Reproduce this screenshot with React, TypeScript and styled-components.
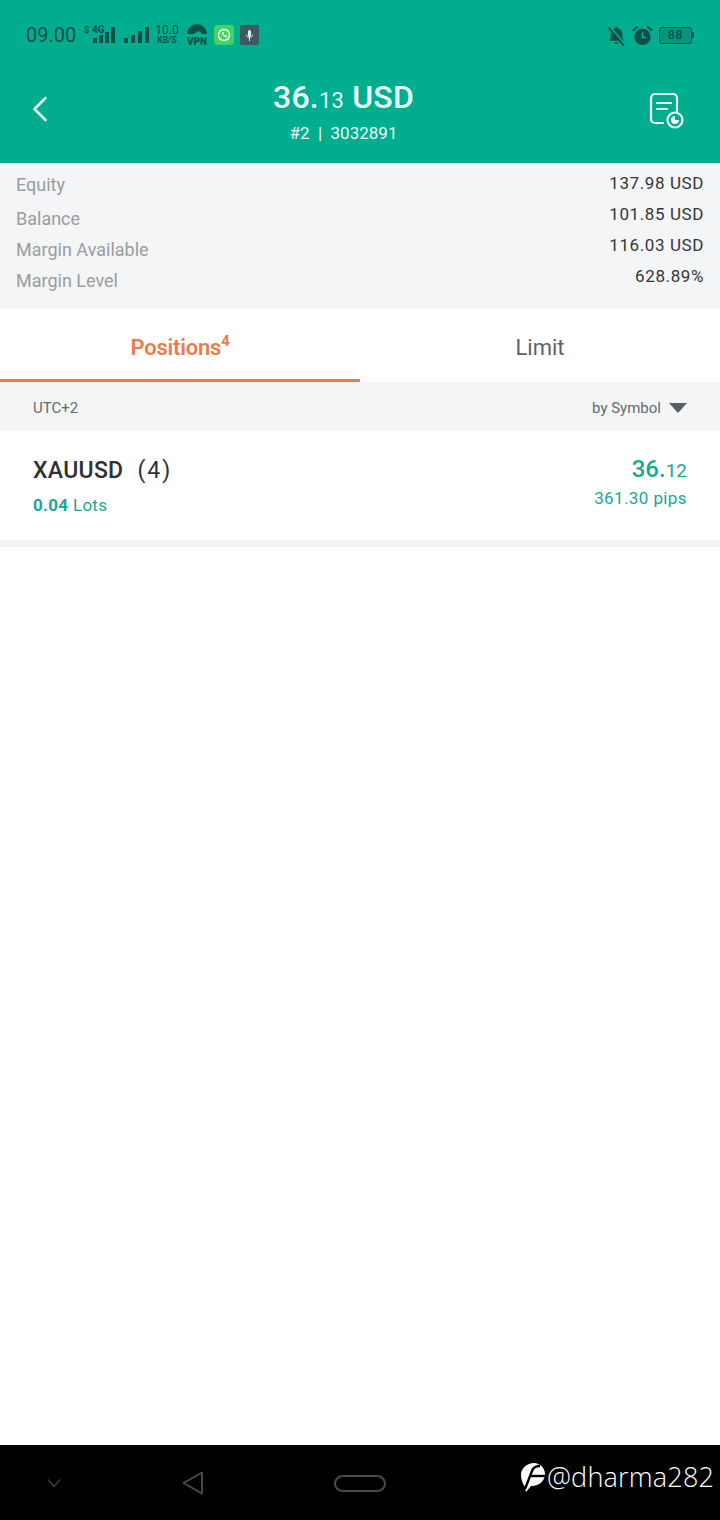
import styled, { createGlobalStyle } from "styled-components";
import { ChevronLeft } from "lucide-react";

const GlobalStyle = createGlobalStyle`
  html, body {
    margin: 0;
    padding: 0;
    background: #fff;
  }
  body {
    font-family: Roboto, "Liberation Sans", sans-serif;
  }
`;

const darkIcon = "#0b4f47";
const green = "#00ae8f";

const accounts = [
  { label: "Equity", value: "137.98 USD" },
  { label: "Balance", value: "101.85 USD" },
  { label: "Margin Available", value: "116.03 USD" },
  { label: "Margin Level", value: "628.89%" },
];

const App = () => {
  return (
    <Page>
      <GlobalStyle />
      <Header>
        <StatusBar>
          <StatusGroup>
            <Clock>09.00</Clock>
            <SimIcon />
            <BarsIcon />
            <Speed>
              <b>10.0</b>
              <span>KB/S</span>
            </Speed>
            <VpnIcon />
            <WhatsappIcon />
            <MicTile />
          </StatusGroup>
          <StatusRight>
            <BellOffIcon />
            <AlarmIcon />
            <Battery>
              <BatteryBody>88</BatteryBody>
              <BatteryCap />
            </Battery>
          </StatusRight>
        </StatusBar>
        <TitleBar>
          <BackButton>
            <ChevronLeft size={44} strokeWidth={1.4} color="#e8fbf6" />
          </BackButton>
          <TitleBlock>
            <Amount>
              36.<small>13</small> USD
            </Amount>
            <Account>#2&nbsp;&nbsp;|&nbsp;&nbsp;3032891</Account>
          </TitleBlock>
          <HistoryIcon />
        </TitleBar>
      </Header>

      <Summary>
        <SummaryColumn>
          {accounts.map((a) => (
            <SummaryLabel key={a.label}>{a.label}</SummaryLabel>
          ))}
        </SummaryColumn>
        <SummaryValues>
          {accounts.map((a) => (
            <SummaryValue key={a.label}>{a.value}</SummaryValue>
          ))}
        </SummaryValues>
      </Summary>

      <Tabs>
        <Tab $active>
          Positions<sup>4</sup>
        </Tab>
        <Tab>Limit</Tab>
      </Tabs>

      <FilterBar>
        <span>UTC+2</span>
        <Sort>
          by Symbol
          <Caret />
        </Sort>
      </FilterBar>

      <PositionRow>
        <div>
          <Symbol>
            XAUUSD<Count>(4)</Count>
          </Symbol>
          <Lots>
            <b>0.04</b> Lots
          </Lots>
        </div>
        <Profit>
          <ProfitValue>
            36.<small>12</small>
          </ProfitValue>
          <Pips>361.30 pips</Pips>
        </Profit>
      </PositionRow>
      <Divider />

      <Empty />

      <NavBar>
        <NavIcons>
          <svg width="18" height="12" viewBox="0 0 18 12" fill="none">
            <path d="M3 2.5 9 9.5l6-7" stroke="#3d3d3d" strokeWidth="1.5" />
          </svg>
          <BackTriangle width="24" height="26" viewBox="0 0 24 26" fill="none">
            <path
              d="M21 2.5v21L2.5 13z"
              stroke="#4a4a4a"
              strokeWidth="2"
              strokeLinejoin="round"
            />
          </BackTriangle>
          <HomePill />
        </NavIcons>
        <Watermark>
          <FeatherLogo />
          <span>@dharma282</span>
        </Watermark>
      </NavBar>
    </Page>
  );
};

const SimIcon = () => (
  <svg width="34" height="20" viewBox="0 0 34 20" fill={darkIcon}>
    <text x="0" y="8" fontSize="9" fontWeight="700" fontFamily="Roboto, sans-serif">
      $
    </text>
    <text x="8" y="8" fontSize="10" fontWeight="700" fontFamily="Roboto, sans-serif">
      4G
    </text>
    <rect x="9" y="13" width="4" height="5" />
    <rect x="15" y="10" width="4" height="8" />
    <rect x="21" y="7" width="4" height="11" />
    <rect x="27" y="2" width="4" height="16" />
  </svg>
);

const BarsIcon = () => (
  <svg width="25" height="20" viewBox="0 0 25 20" fill={darkIcon}>
    <rect x="0" y="13" width="4" height="5" />
    <rect x="7" y="10" width="4" height="8" />
    <rect x="14" y="6" width="4" height="12" />
    <rect x="21" y="2" width="4" height="16" />
  </svg>
);

const VpnIcon = () => (
  <VpnSvg width="22" height="24" viewBox="0 0 22 24">
    <path d="M1 12a10 10 0 0 1 20 0h-5a6 6 0 0 0-4-3l-4 3z" fill={darkIcon} />
    <text
      x="11"
      y="23"
      textAnchor="middle"
      fontSize="10"
      fontWeight="900"
      fill={darkIcon}
      fontFamily="Roboto, sans-serif"
    >
      VPN
    </text>
  </VpnSvg>
);

const WhatsappIcon = () => (
  <svg width="20" height="20" viewBox="0 0 20 20">
    <rect width="20" height="20" rx="4" fill="#3ed65f" />
    <circle cx="10" cy="10" r="5.5" fill="none" stroke="#fff" strokeWidth="1.4" />
    <path d="M4.5 15.5l1.2-3.6 2.3 2.3z" fill="#fff" />
    <path
      d="M8 7.5c0 2.5 2 4.500 4.500 4.700l.6-1.400-1.500-.7-.6.6c-.7-.3-1.200-.8-1.500-1.500l.6-.6-.7-1.500z"
      fill="#fff"
    />
  </svg>
);

const MicTile = () => (
  <svg width="19" height="20" viewBox="0 0 19 20">
    <rect width="19" height="20" rx="2" fill="#3f5a60" />
    <rect x="8" y="5" width="3" height="7" rx="1.5" fill="#e6eeee" />
    <path
      d="M6.500 9.500c0 4 6 4 6 0M9.500 12v4"
      stroke="#e6eeee"
      strokeWidth="1"
      fill="none"
    />
  </svg>
);

const BellOffIcon = () => (
  <svg width="19" height="21" viewBox="0 0 20 22">
    <path
      d="M10 2a1.500 1.500 0 0 1 1.500 1.500c3 .8 4.500 3 4.500 6v4l2 3H2l2-3v-4c0-3 1.500-5.200 4.500-6A1.500 1.500 0 0 1 10 2zM8 18h4a2 2 0 0 1-4 0z"
      fill={darkIcon}
    />
    <path d="M2 1l16 19" stroke={green} strokeWidth="3" />
    <path d="M1.500 2.500l16 19" stroke={darkIcon} strokeWidth="2" />
  </svg>
);

const AlarmIcon = () => (
  <svg width="21" height="21" viewBox="0 0 22 22">
    <circle cx="11" cy="12.500" r="8.500" fill={darkIcon} />
    <path
      d="M1.500 5.500 5.500 2M20.500 5.500 16.500 2"
      stroke={darkIcon}
      strokeWidth="2"
      strokeLinecap="round"
    />
    <path d="M11 7.500v5.500h4" fill="none" stroke={green} strokeWidth="1.600" />
  </svg>
);

const HistoryIcon = () => (
  <HistorySvg width="38" height="38" viewBox="0 0 38 38" fill="none">
    <path
      d="M16 31H8a4 4 0 0 1-4-4V6a4 4 0 0 1 4-4h18a4 4 0 0 1 4 4v13"
      stroke="#e8fbf6"
      strokeWidth="2.200"
      strokeLinecap="round"
    />
    <path
      d="M10 11h14M10 17h10"
      stroke="#e8fbf6"
      strokeWidth="2.200"
      strokeLinecap="round"
    />
    <circle cx="28" cy="28" r="7.500" stroke="#e8fbf6" strokeWidth="2.200" fill={green} />
    <path d="M28 24v4h4a4 4 0 1 1-4-4z" fill="#e8fbf6" />
  </HistorySvg>
);

const FeatherLogo = () => (
  <svg width="26" height="32" viewBox="0 0 26 32">
    <path
      d="M5 26c-1-2-4-6-4-12C1 7 7 2 14 2c6 0 11 5 11 11 0 7-6 12-13 12h-1l-5 6z"
      fill="#fff"
    />
    <path d="M5 28 12 10c1-3 4-5 8-5" stroke="#000" strokeWidth="2.400" fill="none" />
    <path d="M9 15h16" stroke="#000" strokeWidth="2.400" />
  </svg>
);

const Page = styled.div`
  width: 720px;
  height: 1520px;
  display: flex;
  flex-direction: column;
  overflow: hidden;
  background: #fff;
`;

const Header = styled.header`
  height: 163px;
  flex: none;
  background: ${green};
  display: flex;
  flex-direction: column;
`;

const StatusBar = styled.div`
  height: 70px;
  box-sizing: border-box;
  padding: 0 26px;
  display: flex;
  align-items: center;
  justify-content: space-between;
`;

const StatusGroup = styled.div`
  display: flex;
  align-items: center;
  gap: 6px;
`;

const StatusRight = styled.div`
  display: flex;
  align-items: center;
  gap: 6px;
`;

const Clock = styled.span`
  font-size: 20px;
  color: ${darkIcon};
  margin-right: 2px;
`;

const Speed = styled.div`
  display: flex;
  flex-direction: column;
  align-items: center;
  color: ${darkIcon};
  line-height: 10px;

  b {
    font-weight: 400;
    font-size: 12px;
  }
  span {
    font-size: 8.5px;
    font-weight: 500;
  }
`;

const VpnSvg = styled.svg`
  margin: -2px 0 0 1px;
`;

const Battery = styled.div`
  display: flex;
  align-items: center;
`;

const BatteryBody = styled.div`
  width: 31px;
  height: 15px;
  border: 1.5px solid ${darkIcon};
  border-radius: 3px;
  background: rgba(11, 79, 71, 0.25);
  color: ${darkIcon};
  font-size: 12px;
  font-weight: 500;
  line-height: 15px;
  text-align: center;
  letter-spacing: 1px;
`;

const BatteryCap = styled.div`
  width: 2px;
  height: 6px;
  background: ${darkIcon};
`;

const TitleBar = styled.div`
  position: relative;
  flex: 1;
  display: flex;
  align-items: flex-start;
  justify-content: center;
`;

const BackButton = styled.div`
  position: absolute;
  left: 18px;
  top: 17px;
  display: flex;
`;

const HistorySvg = styled.svg`
  position: absolute;
  left: 647px;
  top: 22px;
`;

const TitleBlock = styled.div`
  margin-left: -33px;
  color: #eafcf8;
  text-align: center;
`;

const Amount = styled.div`
  font-size: 32px;
  font-weight: 500;
  line-height: 40px;
  margin-top: 7px;
  letter-spacing: 0.2px;

  small {
    font-size: 22px;
    font-weight: 400;
  }
`;

const Account = styled.div`
  font-size: 17px;
  line-height: 24px;
  margin-top: 0;
`;

const Summary = styled.section`
  height: 146px;
  flex: none;
  box-sizing: border-box;
  background: #f4f5f7;
  display: flex;
  justify-content: space-between;
  padding: 0 16px;
`;

const SummaryColumn = styled.div`
  display: flex;
  flex-direction: column;
  padding-top: 6px;

  & > div:nth-child(2) {
    margin-top: 3px;
  }
`;

const SummaryValues = styled.div`
  display: flex;
  flex-direction: column;
  align-items: flex-end;
  padding-top: 5px;
`;

const SummaryLabel = styled.div`
  font-size: 18px;
  line-height: 31px;
  color: #9a9c9f;
`;

const SummaryValue = styled.div`
  font-size: 17px;
  line-height: 31px;
  color: #333638;
  letter-spacing: 0.6px;
`;

const Tabs = styled.nav`
  height: 73px;
  flex: none;
  display: flex;
  background: #fff;
`;

const Tab = styled.div<{ $active?: boolean }>`
  flex: 1;
  display: flex;
  align-items: center;
  justify-content: center;
  font-size: 22px;
  padding-top: 6px;
  box-sizing: border-box;
  font-weight: ${(p) => (p.$active ? 600 : 400)};
  color: ${(p) => (p.$active ? "#ef7a4c" : "#5f6265")};
  border-bottom: 3px solid ${(p) => (p.$active ? "#f2784b" : "transparent")};
  letter-spacing: ${(p) => (p.$active ? "-0.2px" : "0")};

  sup {
    font-size: 15px;
    font-weight: 700;
    line-height: 1;
    margin-top: -12px;
    align-self: center;
  }
`;

const FilterBar = styled.div`
  height: 49px;
  flex: none;
  box-sizing: border-box;
  background: #f4f5f7;
  padding: 2px 33px 0;
  display: flex;
  align-items: center;
  justify-content: space-between;
  font-size: 15px;
  color: #66696c;
`;

const Sort = styled.div`
  display: flex;
  align-items: center;
  gap: 8px;
`;

const Caret = styled.i`
  width: 0;
  height: 0;
  border-left: 9px solid transparent;
  border-right: 9px solid transparent;
  border-top: 10px solid #5a5d60;
`;

const PositionRow = styled.div`
  height: 109px;
  flex: none;
  box-sizing: border-box;
  padding: 24px 33px 0;
  display: flex;
  justify-content: space-between;
  background: #fff;
`;

const Symbol = styled.div`
  font-size: 23px;
  line-height: 30px;
  font-weight: 500;
  color: #2f3133;
  letter-spacing: 0.3px;
  padding-top: 1px;
`;

const Count = styled.span`
  font-weight: 400;
  margin-left: 14px;
  letter-spacing: 2px;
`;

const Lots = styled.div`
  font-size: 17px;
  line-height: 22px;
  margin-top: 8px;
  color: #1aa88f;
  letter-spacing: 0.3px;

  b {
    font-weight: 700;
  }
`;

const Profit = styled.div`
  display: flex;
  flex-direction: column;
  align-items: flex-end;
  color: #1aa88f;
`;

const ProfitValue = styled.div`
  font-size: 24px;
  line-height: 28px;
  font-weight: 500;

  small {
    font-size: 19px;
    font-weight: 400;
  }
`;

const Pips = styled.div`
  font-size: 17px;
  line-height: 22px;
  margin-top: 2px;
  letter-spacing: 0.4px;
`;

const Divider = styled.div`
  height: 7px;
  flex: none;
  background: #f2f3f4;
`;

const Empty = styled.div`
  flex: 1;
  background: #fff;
`;

const NavBar = styled.footer`
  height: 75px;
  flex: none;
  background: #000;
  position: relative;
  display: flex;
  align-items: center;
`;

const NavIcons = styled.div`
  display: flex;
  align-items: center;
  margin-left: 45px;
  margin-top: 1px;
  width: 341px;
  justify-content: space-between;
`;

const BackTriangle = styled.svg`
  margin-right: 4px;
`;

const HomePill = styled.div`
  width: 48px;
  height: 13px;
  border: 2px solid #4a4a4a;
  border-radius: 9px;
  margin-left: 8px;
`;

const Watermark = styled.div`
  position: absolute;
  left: 520px;
  top: 14px;
  display: flex;
  align-items: center;
  gap: 1px;
  color: #fff;
  font-family: "Open Sans", Roboto, sans-serif;
  font-size: 27px;
  font-weight: 300;
  line-height: 36px;
  letter-spacing: 0.2px;
`;

export default App;
